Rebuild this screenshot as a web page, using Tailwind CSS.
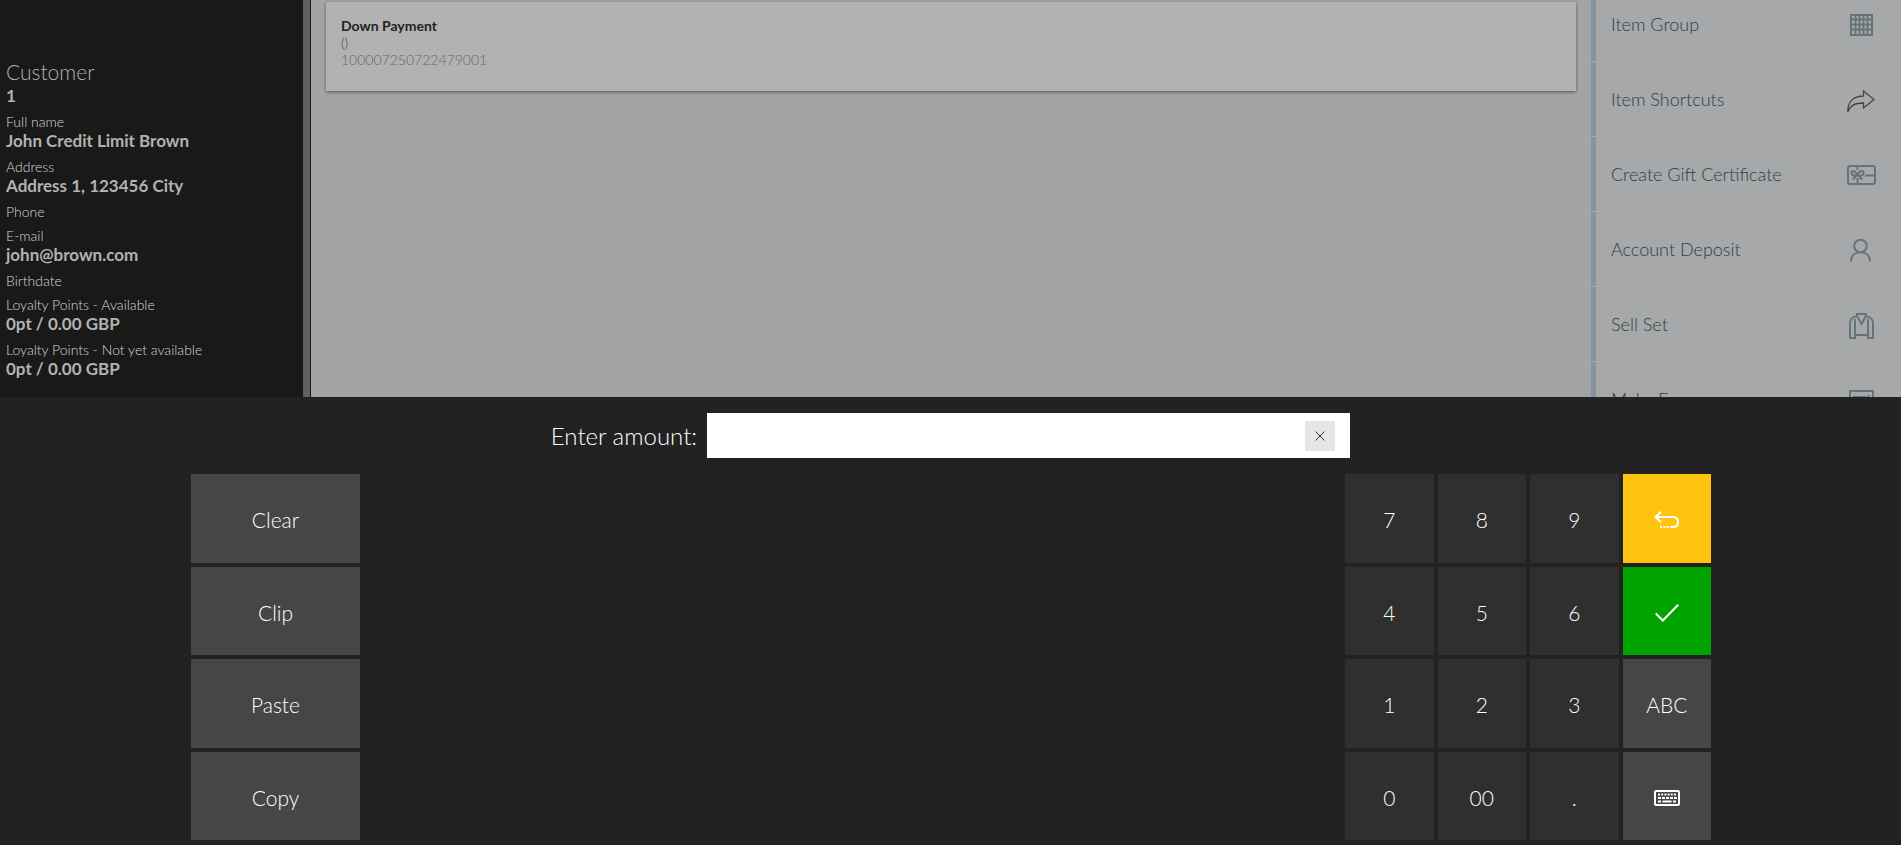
<!DOCTYPE html>
<html lang="en">
<head>
    <meta charset="UTF-8">
    <meta name="viewport" content="width=device-width, initial-scale=1.0">
    <title>Down Payment</title>
    <script src="https://cdn.jsdelivr.net/npm/@tailwindcss/browser@4"></script>
</head>
<body class="flex h-screen flex-col overflow-hidden bg-[#222222] font-['Lato',sans-serif]">

    <!-- Dimmed POS screen behind the keyboard -->
    <div class="flex min-h-0 flex-1 overflow-hidden">

        <!-- Customer details -->
        <aside class="w-[311px] shrink-0 border-r border-[#191919] bg-[#606060]">
            <div class="mr-[7px] h-full bg-[#191919] pt-[59px] pl-1.5 text-[#b2b2b2]">
                <h2 class="text-[21px] leading-[26px] font-light">Customer</h2>
                <p class="mb-2 text-[17px] leading-[21px] font-bold">1</p>
                <dl class="text-[14px] leading-4 font-light text-[#d6d6d6]">
                    <dt>Full name</dt>
                    <dd class="text-[17px] leading-[21px] font-bold text-[#b2b2b2]">John Credit Limit Brown</dd>
                    <dt class="mt-2">Address</dt>
                    <dd class="text-[17px] leading-[21px] font-bold text-[#b2b2b2]">Address 1, 123456 City</dd>
                    <dt class="mt-2">Phone</dt>
                    <dt class="mt-2">E-mail</dt>
                    <dd class="text-[17px] leading-[21px] font-bold text-[#b2b2b2]">john@brown.com</dd>
                    <dt class="mt-2">Birthdate</dt>
                    <dt class="mt-2">Loyalty Points - Available</dt>
                    <dd class="text-[17px] leading-[21px] font-bold text-[#b2b2b2]">0pt / 0.00 GBP</dd>
                    <dt class="mt-2">Loyalty Points - Not yet available</dt>
                    <dd class="text-[17px] leading-[21px] font-bold text-[#b2b2b2]">0pt / 0.00 GBP</dd>
                </dl>
            </div>
        </aside>

        <!-- Receipt lines -->
        <main class="min-w-0 flex-1 bg-[#a4a4a4] px-[15px] pt-0.5">
            <div class="h-[89px] bg-[#b2b2b2] p-[15px] text-[14px] leading-[17px] shadow-[0_1px_3px_rgba(0,0,0,0.5)]">
                <p class="font-bold text-[#222222]">Down Payment</p>
                <p class="font-light text-[#444444]">()</p>
                <p class="font-light text-[#666666]">100007250722479001</p>
            </div>
        </main>

        <!-- Actions -->
        <nav class="w-[310px] shrink-0 bg-[#a6a8aa] text-[18px] font-light text-[#2c3f47]">
            <ul class="-mt-[13px]">
                <li class="border-b border-[#a7a9ab]">
                    <a href="#" class="flex h-[74px] items-center justify-between border-l-5 border-[#8592a0] pr-[25px] pl-[15px]">
                        Item Group
                        <svg class="mt-1 h-[30px] w-[30px]" viewBox="0 0 30 30" fill="none" stroke="#667479" stroke-width="2">
                            <path d="M5 4h21v20H5z"/>
                            <path d="M9.500 3v22M13.500 3v22M17.500 3v22M21.500 3v22M4 8.500h23M4 13.500h23M4 18.500h23" stroke-width="1.800"/>
                        </svg>
                    </a>
                </li>
                <li class="border-b border-[#a7a9ab]">
                    <a href="#" class="flex h-[74px] items-center justify-between border-l-5 border-[#8592a0] pr-[25px] pl-[15px]">
                        Item Shortcuts
                        <svg class="mt-1 h-[30px] w-[30px]" viewBox="0 0 30 30" fill="none" stroke="#444444" stroke-width="1.300">
                            <path d="M1.800 26C1.500 15.500 7.500 10.200 17.500 10V5L28 13.500 17.500 22v-5C9 17 4.500 19 1.800 26z"/>
                        </svg>
                    </a>
                </li>
                <li class="border-b border-[#a7a9ab]">
                    <a href="#" class="flex h-[74px] items-center justify-between border-l-5 border-[#8592a0] pr-[25px] pl-[15px]">
                        Create Gift Certificate
                        <svg class="mt-1 h-[30px] w-[30px]" viewBox="0 0 30 30" fill="none" stroke="#667479" stroke-width="2">
                            <rect x="2" y="5" width="27" height="18" rx="2"/>
                            <path d="M11.500 5v4M11.500 17v6M19 14.500h10"/>
                            <path d="M11.500 14C9.500 9.500 5.500 9 5.500 12s4 3 6 2c2-5 6-5 6-2s-4 3-6 2zM11 14l-4 4.500M12 14l4 4.500"/>
                        </svg>
                    </a>
                </li>
                <li class="border-b border-[#a7a9ab]">
                    <a href="#" class="flex h-[74px] items-center justify-between border-l-5 border-[#8592a0] pr-[25px] pl-[15px]">
                        Account Deposit
                        <svg class="mt-1 h-[30px] w-[30px]" viewBox="0 0 30 30" fill="none" stroke="#667479" stroke-width="2">
                            <circle cx="14.500" cy="10" r="6.300"/>
                            <path d="M5 25.500c0-6 4-9.200 9.500-9.200s9.500 3.200 9.500 9.200"/>
                        </svg>
                    </a>
                </li>
                <li class="border-b border-[#a7a9ab]">
                    <a href="#" class="flex h-[74px] items-center justify-between border-l-5 border-[#8592a0] pr-[25px] pl-[15px]">
                        Sell Set
                        <svg class="mt-1 h-[30px] w-[30px]" viewBox="0 0 30 30" fill="none" stroke="#667479" stroke-width="2">
                            <path d="M11 3h9M11 2v3C6 6 4 8 4 13v14h5V8M20 2v3c5 1 7 3 7 8v14h-5V8M9 24h13M11 5l4.500 8L20 5"/>
                        </svg>
                    </a>
                </li>
                <li>
                    <a href="#" class="flex h-[74px] items-center justify-between border-l-5 border-[#8592a0] pr-[25px] pl-[15px]">
                        Make Expense
                        <svg class="mt-1 h-[30px] w-[30px]" viewBox="0 0 30 30" fill="none" stroke="#667479" stroke-width="2">
                            <path d="M4 5h23v20H4zM7 11h13M23 9l-3 6M7 16h12"/>
                        </svg>
                    </a>
                </li>
            </ul>
        </nav>
    </div>

    <!-- Amount entry -->
    <form class="shrink-0 px-4 pt-4 pb-[5px] font-light text-white">
        <div class="flex items-center justify-center gap-2.5">
            <label for="amount" class="text-[24px] leading-[30px]">Enter amount:</label>
            <div class="relative w-[643px]">
                <input id="amount" type="text" class="block h-[45px] w-full bg-white pr-16 pl-3 text-[24px] text-black outline-none">
                <button type="button" aria-label="Clear amount" class="absolute top-2 right-[15px] flex size-[30px] items-center justify-center bg-[#e6e6e6]">
                    <svg class="size-[10px]" viewBox="0 0 10 10" fill="none" stroke="#333333" stroke-width="1"><path d="M.5.5l9 9M9.500.5l-9 9"/></svg>
                </button>
            </div>
        </div>

        <div class="mx-auto mt-4 flex h-[366px] max-w-[1521px] justify-between pl-px text-[21px]">
            <div class="grid w-[169px] grid-rows-4 gap-1">
                <button type="button" class="bg-[#464646] pt-[3px]">Clear</button>
                <button type="button" class="bg-[#464646] pt-[3px]">Clip</button>
                <button type="button" class="bg-[#464646] pt-[3px]">Paste</button>
                <button type="button" class="bg-[#464646] pt-[3px]">Copy</button>
            </div>

            <div class="grid w-[366px] grid-cols-4 grid-rows-4 gap-1">
                <button type="button" class="bg-[#2f2f2f] pt-[3px]">7</button>
                <button type="button" class="bg-[#2f2f2f] pt-[3px]">8</button>
                <button type="button" class="bg-[#2f2f2f] pt-[3px]">9</button>
                <button type="button" aria-label="Back" class="flex items-center justify-center bg-[#ffc40f]">
                    <svg class="mt-1 h-[18px] w-[26px]" viewBox="0 0 26 18" fill="none" stroke="#ffffff" stroke-width="2">
                        <path d="M7 .8L1.500 6 7 11.200M1.500 6H19c3 0 5 2 5 5s-2 5-5 5h-3"/>
                        <path d="M6 16h9" stroke-dasharray="2 1.300"/>
                    </svg>
                </button>
                <button type="button" class="bg-[#2f2f2f] pt-[3px]">4</button>
                <button type="button" class="bg-[#2f2f2f] pt-[3px]">5</button>
                <button type="button" class="bg-[#2f2f2f] pt-[3px]">6</button>
                <button type="submit" aria-label="Confirm" class="flex items-center justify-center bg-[#00a300]">
                    <svg class="mt-1 h-[18px] w-[24px]" viewBox="0 0 24 18" fill="none" stroke="#ffffff" stroke-width="2"><path d="M.8 9.500l7 7L23.200.8"/></svg>
                </button>
                <button type="button" class="bg-[#2f2f2f] pt-[3px]">1</button>
                <button type="button" class="bg-[#2f2f2f] pt-[3px]">2</button>
                <button type="button" class="bg-[#2f2f2f] pt-[3px]">3</button>
                <button type="button" class="bg-[#464646] pt-[3px]">ABC</button>
                <button type="button" class="bg-[#2f2f2f] pt-[3px]">0</button>
                <button type="button" class="bg-[#2f2f2f] pt-[3px]">00</button>
                <button type="button" class="bg-[#2f2f2f] pt-[3px]">.</button>
                <button type="button" aria-label="Keyboard" class="flex items-center justify-center bg-[#464646]">
                    <svg class="mt-1 h-[16px] w-[26px]" viewBox="0 0 26 16" fill="none" stroke="#ffffff" stroke-width="2">
                        <rect x="1" y="1" width="24" height="14" rx="1"/>
                        <path d="M4 4.500h19" stroke-dasharray="2 1.200"/>
                        <path d="M4 8h19" stroke-dasharray="3 1"/>
                        <path d="M4 11.500h3M8.500 11.500h9M19 11.500h3"/>
                    </svg>
                </button>
            </div>
        </div>
    </form>

</body>
</html>
